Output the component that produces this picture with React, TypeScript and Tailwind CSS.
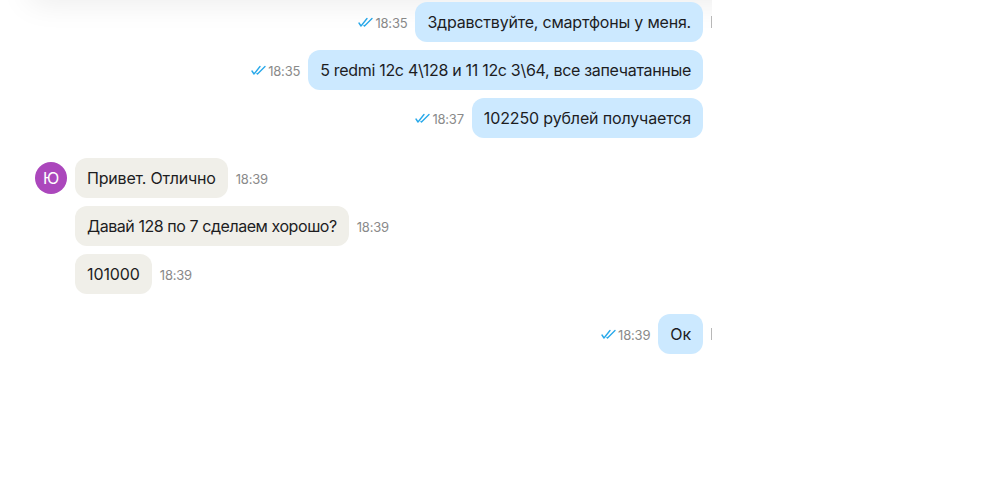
const font = { fontFamily: '"Inter", "Noto Sans", sans-serif' }

function Checks() {
  return (
    <svg width="15" height="10" viewBox="0 0 15 10" fill="none" stroke="#29a9ea" strokeWidth="1.4" strokeLinecap="round" strokeLinejoin="round">
      <path d="M1 6l2 3L9 1.5" />
      <path d="M6 8.5L6.5 9 14 1.5" />
    </svg>
  )
}

function Time({ value }: { value: string }) {
  return <span className="pt-px text-[13px] leading-5 tracking-[-0.2px] text-[#8a8a8a]">{value}</span>
}

function Outgoing({ text, time, tracking, marker }: { text: string; time: string; tracking: string; marker?: boolean }) {
  return (
    <div className="flex items-center justify-end pr-[9px]">
      <div className="mr-2 flex items-center gap-0.5">
        <Checks />
        <Time value={time} />
      </div>
      <div className={`relative flex h-10 items-center rounded-xl bg-[#cce9ff] px-3 text-base text-[#1d1d1f] ${tracking}`}>
        {text}
        {marker && <div className="absolute top-[14px] -right-[9px] h-3 w-px bg-[#b8b8b8]" />}
      </div>
    </div>
  )
}

function Incoming({ text, time, tracking }: { text: string; time: string; tracking: string }) {
  return (
    <div className="flex items-center gap-2">
      <div className={`flex h-10 items-center rounded-xl bg-[#f0efe9] px-3 text-base text-[#1d1d1f] ${tracking}`}>{text}</div>
      <Time value={time} />
    </div>
  )
}

export default function App() {
  return (
    <div className="h-[479px] w-[982px] overflow-hidden bg-white" style={font}>
      <div className="relative flex h-full w-[712px] flex-col overflow-hidden pt-0.5">
        <div className="absolute -top-6 left-[30px] -right-10 h-6 shadow-[0_0_32px_rgba(0,0,0,0.1)]" />
        <div className="flex flex-col gap-2">
          <Outgoing text="Здравствуйте, смартфоны у меня." time="18:35" tracking="tracking-[-0.2px]" marker />
          <Outgoing text="5 redmi 12c 4\128 и 11 12c 3\64, все запечатанные" time="18:35" tracking="tracking-[-0.31px]" />
          <Outgoing text="102250 рублей получается" time="18:37" tracking="tracking-[-0.14px]" />
        </div>
        <div className="mt-5 flex gap-2 pl-[35px]">
          <div className="mt-1 flex h-8 w-8 items-center justify-center rounded-full bg-[#ab47bc] text-base text-white">Ю</div>
          <div className="flex flex-col gap-2">
            <Incoming text="Привет. Отлично" time="18:39" tracking="tracking-[-0.2px]" />
            <Incoming text="Давай 128 по 7 сделаем хорошо?" time="18:39" tracking="tracking-[-0.44px]" />
            <Incoming text="101000" time="18:39" tracking="tracking-[-0.1px]" />
          </div>
        </div>
        <div className="mt-5">
          <Outgoing text="Ок" time="18:39" tracking="tracking-[-0.1px]" marker />
        </div>
      </div>
    </div>
  )
}
